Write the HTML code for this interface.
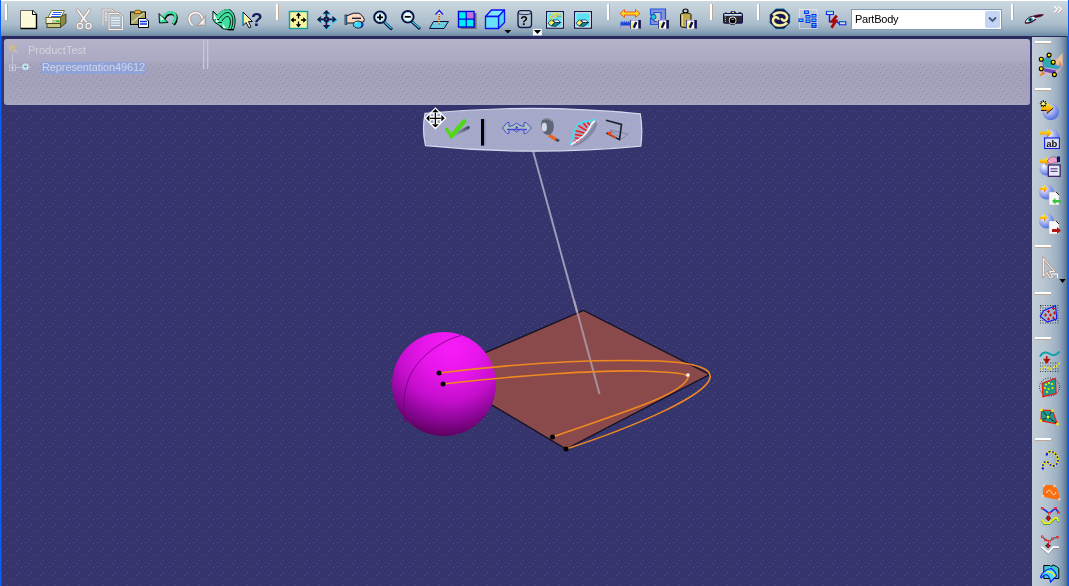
<!DOCTYPE html>
<html><head><meta charset="utf-8">
<style>
*{margin:0;padding:0;box-sizing:border-box}
html,body{width:1069px;height:586px;overflow:hidden;background:#35346c;font-family:"Liberation Sans",sans-serif;position:relative}
.abs{position:absolute}
#lstrip{left:0;top:0;width:2px;height:586px;background:linear-gradient(90deg,#0c60f4 50%,#2046b8 50%)}
#rstrip{left:1067px;top:0;width:2px;height:586px;background:#0c5cf0}
#topbar{left:1px;top:0;width:1067px;height:36px;background:linear-gradient(#ffffff 0,#ffffff 1px,#cbd8e0 1px,#bccbd6 12px,#aabccb 24px,#8ea6ba 31px,#6a88a4 36px)}
#darkband{left:2px;top:36px;width:1065px;height:3px;background:#2a2a5e}
#tree{left:4px;top:39px;width:1026px;height:66px;border-radius:3px;background:linear-gradient(#b6b4ca 0,#b0aec6 10px,#acaac2 22px,#a8a6be 23px,#a6a4bc 27px,#a4a2ba 41px,#a6a4bc 60px,#aaa8c0 66px)}
#rbar{left:1032px;top:37px;width:35px;height:549px;background:linear-gradient(90deg,#c2ced8 0,#b8c6d2 12px,#a8b8c8 21px,#96aabe 27px,#7c94ac 31px,#5c7a9a 34px,#587898 35px)}
.sep{position:absolute;width:3px;height:16px;background:#fff;border-right:1px solid #c0a898}
.hsep{position:absolute;height:3px;width:16px;background:#fff;border-bottom:1px solid #c0a898}
svg{position:absolute;left:0;top:0;overflow:visible}
.txt{will-change:transform}
</style></head><body>
<svg width="1069" height="586" style="left:0;top:0">
 <defs>
  <pattern id="dots" width="12" height="12" patternUnits="userSpaceOnUse">
   <rect x="1" y="2" width="1" height="1" fill="#5454a0"/>
   <rect x="5" y="0" width="1" height="1" fill="#48483a"/>
   <rect x="9" y="3" width="1" height="1" fill="#5454a0"/>
   <rect x="3" y="6" width="1" height="1" fill="#48483a"/>
   <rect x="7" y="8" width="1" height="1" fill="#5454a0"/>
   <rect x="11" y="6" width="1" height="1" fill="#48483a"/>
   <rect x="1" y="10" width="1" height="1" fill="#48483a"/>
   <rect x="4" y="11" width="1" height="1" fill="#5454a0"/>
  </pattern>
  <pattern id="tdots" width="10" height="8" patternUnits="userSpaceOnUse">
   <rect x="0" y="0" width="1" height="1" fill="#6c6c80"/>
   <rect x="5" y="1" width="1" height="1" fill="#7a7ad8"/>
   <rect x="3" y="3" width="1" height="1" fill="#6c6c80"/>
   <rect x="8" y="4" width="1" height="1" fill="#6c6c80"/>
   <rect x="1" y="6" width="1" height="1" fill="#7a7ad8"/>
   <rect x="6" y="6" width="1" height="1" fill="#6c6c80"/>
  </pattern>
 </defs>
 <rect x="1" y="109" width="1031" height="477" fill="url(#dots)" opacity="0.75"/>
</svg>
<div id="lstrip" class="abs"></div>
<div id="rstrip" class="abs"></div>
<div id="topbar" class="abs"></div>
<div id="darkband" class="abs"></div>
<div id="tree" class="abs"></div>
<div id="rbar" class="abs"></div>

<div class="sep" style="left:5px;top:4px"></div>
<div class="sep" style="left:276px;top:4px"></div>
<div class="sep" style="left:607px;top:4px"></div>
<div class="sep" style="left:710px;top:4px"></div>
<div class="sep" style="left:757px;top:4px"></div>
<div class="sep" style="left:1011px;top:4px"></div>

<div class="hsep" style="left:1035px;top:41px"></div>
<div class="hsep" style="left:1035px;top:88px"></div>
<div class="hsep" style="left:1035px;top:245px"></div>
<div class="hsep" style="left:1035px;top:292px"></div>
<div class="hsep" style="left:1035px;top:337px"></div>
<div class="hsep" style="left:1035px;top:438px"></div>

<div class="abs" style="left:851px;top:9px;width:151px;height:21px;background:#fff;border:1px solid #7f9db9"></div>
<div class="abs txt" style="left:855px;top:12px;font-size:11px;letter-spacing:-0.25px;color:#000;line-height:14px">PartBody</div>
<div class="abs" style="left:985px;top:11px;width:15px;height:17px;background:#c4d4f4;border-radius:2px"></div>

<svg width="1069" height="110">
 <rect x="5" y="63" width="1024" height="40" fill="url(#tdots)" opacity="0.42"/>
 <rect x="203" y="39.5" width="1.3" height="29.5" fill="#c8c8dc"/>
 <rect x="207" y="39.5" width="1.3" height="29.5" fill="#c8c8dc"/>
 <g>
  <path d="M9,45.5 C10,43.5 14,43.5 16,45 C17.5,46.5 17,50 15,51.5 C13,52.5 10,52 9,50 C8.2,48.5 8.3,47 9,45.5 Z" fill="#c8b898" opacity="0.85"/>
  <circle cx="12" cy="47.5" r="0.6" fill="#e8e060"/>
  <path d="M14.5,50.5 L16,52.5 L17.5,50.5" fill="none" stroke="#d0d0e0" stroke-width="0.8"/>
  <path d="M12.4,54 V64.6 M15.8,67.6 H20.8" stroke="#c8c8d8" stroke-width="0.9" fill="none"/>
  <rect x="9.5" y="65" width="6" height="5.5" fill="none" stroke="#c8c8d8" stroke-width="0.9"/>
  <path d="M11,67.75 H14 M12.5,66.25 V69.25" stroke="#e0e0ec" stroke-width="0.9"/>
 </g>
 <g>
  <path d="M21.5,67 H29.5 M25.5,63 V71 M22.7,64.2 L28.3,69.8 M28.3,64.2 L22.7,69.8" stroke="#d0d8e8" stroke-width="1.4"/>
  <circle cx="25.5" cy="67" r="3" fill="#d8e0ec"/>
  <ellipse cx="25.5" cy="66.6" rx="1.7" ry="1" fill="#50a8b8"/>
  <path d="M21.5,71.5 L23,69.5 M24.5,71.5 L25.5,69.5 M27.5,71.5 L28.5,69.5" stroke="#7090c8" stroke-width="0.8"/>
 </g>
</svg>
<div class="abs txt" style="left:28px;top:44px;font-size:11px;color:#d4d4e0;line-height:13px">ProductTest</div>
<div class="abs" style="left:41px;top:62px;width:104px;height:12px;background:#8ea2d8"></div>
<div class="abs txt" style="left:42px;top:61px;font-size:11px;letter-spacing:-0.11px;color:#d0d4e8;line-height:13px">Representation49612</div>
<svg width="1069" height="586">
 <defs>
  <radialGradient id="sph" gradientUnits="userSpaceOnUse" cx="448" cy="350" r="95" fx="452" fy="348">
   <stop offset="0" stop-color="#f81cf8"/>
   <stop offset="0.3" stop-color="#e616ea"/>
   <stop offset="0.55" stop-color="#c40ecc"/>
   <stop offset="0.75" stop-color="#8a0696"/>
   <stop offset="0.92" stop-color="#5c005c"/>
   <stop offset="1" stop-color="#500050"/>
  </radialGradient>
 </defs>
 <line x1="533" y1="151" x2="599.5" y2="394" stroke="#9c9cba" stroke-width="2"/>
 <polygon points="583.5,310.5 709.5,374.5 566,449 438,373" fill="#8a4a4c" stroke="#141020" stroke-width="1.3"/>
 <line x1="574" y1="300" x2="599.5" y2="394" stroke="#b0a0b0" stroke-width="2" opacity="0.8"/>
 <circle cx="444" cy="384" r="52" fill="url(#sph)"/>
 <path d="M461,335.5 C440,341 418,357 409,378 C403,392 403,410 405,423" fill="none" stroke="#70007a" stroke-width="1" opacity="0.8"/>
 <g fill="none" stroke="#f08820" stroke-width="1.6">
  <path d="M439,373 C520,363 600,359 660,361 C700,363 712,370 710,378 C706,395 640,425 566,449"/>
  <path d="M443,384 C520,375 600,370 640,371 C670,372 690,373 688,378 C680,395 630,410 552,437"/>
 </g>
 <circle cx="439" cy="373" r="2.5" fill="#000"/>
 <circle cx="443" cy="384" r="2.5" fill="#000"/>
 <circle cx="552.5" cy="437" r="2.5" fill="#000"/>
 <circle cx="566" cy="449" r="2.5" fill="#000"/>
 <rect x="686.5" y="373.5" width="3" height="3" fill="#fff"/>
</svg>
<svg width="1069" height="40" class="txt">
<!-- new doc -->
<g>
 <path d="M20.5,10.5 H32.5 L36.5,14.5 V28.5 H20.5 Z" fill="#fcfad8"/>
 <path d="M20.5,28.5 V10.5 H32.5" fill="none" stroke="#6a6a6a"/>
 <path d="M32.5,10.5 L36.5,14.5 V28.5 H20.5" fill="none" stroke="#000" stroke-width="1.4"/>
 <path d="M32.5,10.5 V14.5 H36.5" fill="#fff" stroke="#000"/>
</g>
<!-- printer -->
<g>
 <path d="M51.5,10.5 H64.5 L61,17.5 H48 Z" fill="#fff" stroke="#7a7a40"/>
 <path d="M53,12.5 H62 M52,14.5 H61 M51,16.5 H60" stroke="#2860f0" stroke-width="1.2"/>
 <path d="M60,17 L66,14 V23 L60,27.5 Z" fill="#8c8c48" stroke="#303018" stroke-width="0.8"/>
 <rect x="46" y="17.5" width="14.5" height="6" fill="#f0f0d8" stroke="#6a6a20"/>
 <rect x="52" y="20" width="8" height="3" fill="#c8c890"/>
 <rect x="56" y="20.5" width="3.5" height="1.4" fill="#20c040"/>
 <rect x="47" y="23.5" width="13.5" height="4" fill="#c8c888" stroke="#4a4a18"/>
</g>
<!-- scissors disabled -->
<g opacity="0.85" fill="none" stroke-linecap="round">
 <path d="M77.5,10 L87.5,23.5 M89.5,10 L80,23.5" stroke="#b09890" stroke-width="3.2"/>
 <path d="M77.5,10 L87.5,23.5 M89.5,10 L80,23.5" stroke="#fff" stroke-width="1.6"/>
 <circle cx="80" cy="26" r="2.6" stroke="#b09890" stroke-width="2.6"/>
 <circle cx="88.5" cy="26" r="2.6" stroke="#b09890" stroke-width="2.6"/>
 <circle cx="80" cy="26" r="2.6" stroke="#fff" stroke-width="1.2"/>
 <circle cx="88.5" cy="26" r="2.6" stroke="#fff" stroke-width="1.2"/>
</g>
<!-- copy disabled -->
<g opacity="0.85" fill="none">
 <path d="M103,25.5 V10 H112 L114,12 V14" stroke="#b09890" stroke-width="2.4"/>
 <path d="M103,25.5 V10 H112 L114,12 V14" stroke="#fff" stroke-width="1"/>
 <path d="M109,29.5 V13.5 H119 L122.5,17 V29.5 Z" stroke="#b09890" stroke-width="2.4"/>
 <path d="M109,29.5 V13.5 H119 L122.5,17 V29.5 Z" stroke="#fff" stroke-width="1"/>
 <path d="M105,14 H107 M105,17 H107 M105,20 H107 M111,18 H120 M111,20.5 H120 M111,23 H120 M111,25.5 H120" stroke="#fff" stroke-width="1"/>
</g>
<!-- paste -->
<g>
 <rect x="130.5" y="12" width="15" height="12.5" fill="#a8a468" stroke="#000" stroke-width="1"/>
 <path d="M131.5,23 L144,13" stroke="#d8d8a8" stroke-width="1.5"/>
 <path d="M134,13.5 L135.5,10.3 H140 L141.5,13.5 Z" fill="#f0b820" stroke="#604010" stroke-width="0.8"/>
 <path d="M138.5,18.5 H146 L148.5,21 V27.5 H138.5 Z" fill="#fff" stroke="#000"/>
 <path d="M140,21.5 H147 M140,24 H147" stroke="#0030f0" stroke-width="1.3"/>
</g>
<!-- undo -->
<g>
 <path d="M164,18.5 C166,14 170,13 172.5,13.5 C177,14.5 177,20 173.5,24.5" fill="none" stroke="#000" stroke-width="3.6"/>
 <path d="M163.5,17.5 C165.5,13 169.5,12 172,12.5 C176.5,13.5 176.5,19 173,23.5" fill="none" stroke="#40e0a0" stroke-width="2.6"/>
 <path d="M159,13.5 L159.5,23 L168,22.5 Z" fill="#40e0a0" stroke="#000" stroke-width="0.9"/>
 <path d="M160,15.5 L161,21 L164,19 Z" fill="#e0ffe8"/>
</g>
<!-- redo disabled -->
<g opacity="0.85" fill="none">
 <path d="M192.5,25.5 C189.5,23 188.5,19 189.5,16.5 C191,13 195,12 198,13 C200.5,14 202,16.5 202.5,19" stroke="#b09890" stroke-width="3.4"/>
 <path d="M192.5,25.5 C189.5,23 188.5,19 189.5,16.5 C191,13 195,12 198,13 C200.5,14 202,16.5 202.5,19" stroke="#fff" stroke-width="1.6"/>
 <path d="M205.5,16 V25.5 H197 Z" fill="#fff" stroke="#b09890" stroke-width="1.2"/>
 <path d="M204.3,19 V24.3 H199.5" stroke="#c8b8b0" stroke-width="0.8"/>
</g>
<!-- multi undo -->
<g>
 <path d="M213,11 L217.5,15.5 C220,11.5 224,9.5 228.5,9.5 C232,10 234.5,14 235,19 C235.5,23 234.5,27 233.5,29.5 L228,29.5 L222.5,28.7 L219.5,25.5 L215,22.5 L213,19.5 Z" fill="#40e0a0" stroke="#000" stroke-width="0.9"/>
 <path d="M217.5,15.5 C220,11.5 224,9.5 228.5,9.5" fill="none" stroke="#40e0a0" stroke-width="1.2"/>
 <g fill="none" stroke="#000" stroke-width="0.9">
  <path d="M219.5,18.5 C222,14.5 225,12.5 228,12.5 C231,13 232.5,16 232.8,20 C233,24 232,27 231,29"/>
  <path d="M222,21 C224,18 226,16 228,16.5 C230,17.5 230.5,20 230.3,23 C230,25.5 229.5,27 228.5,28.5"/>
  <path d="M215.5,19.5 H219 M218,22.4 H222 M220,25.5 L224,28.7"/>
 </g>
 <path d="M213.6,13 V19 L216.8,19 Z" fill="#f0fff0"/>
 <path d="M216,18 V22 L218.8,22 Z" fill="#f0fff0"/>
 <path d="M222.8,23.5 V28.2 L225.8,28.2 Z" fill="#f0fff0"/>
 <path d="M228,29.8 H234" stroke="#000" stroke-width="1.2"/>
</g>
<!-- whats this -->
<g>
 <path d="M243,12 V25.5 L246,22.5 L249,28 L251,27 L248.5,21.5 L252.5,21.5 Z" fill="#f8f4a0" stroke="#101040" stroke-width="1"/>
 <path d="M242.5,12 V25.5" stroke="#20b0c0" stroke-width="0.8"/>
 <text x="251" y="26" font-family="Liberation Sans" font-weight="bold" font-size="19" fill="#181858">?</text>
</g>
<!-- fit all -->
<g>
 <rect x="289.5" y="11.5" width="18" height="17" fill="#f8f4a0" stroke="#10a0a0" stroke-width="1.4"/>
 <path d="M298.5,15 V18.5 M298.5,21.5 V25 M292.5,20 H296 M301,20 H304.5" stroke="#000" stroke-width="1.3"/>
 <path d="M298.5,12.6 L295.8,15.8 H301.2 Z M298.5,27.4 L295.8,24.2 H301.2 Z M290.6,20 L293.8,17.3 V22.7 Z M306.4,20 L303.2,17.3 V22.7 Z" fill="#000"/>
</g>
<!-- pan -->
<g transform="translate(0.6,0.6)" fill="#30d8f8" stroke="#30d8f8" stroke-width="1">
 <path d="M326.4,13.8 V25 M320.8,19.4 H332.4" stroke-width="1.6"/>
 <path d="M326.4,10 L322.8,13.8 H330 Z M326.4,29.2 L322.8,25 H330 Z M317,19.4 L320.8,16 V22.8 Z M336.6,19.4 L332.4,16 V22.8 Z"/>
 <circle cx="326.4" cy="19.4" r="2.8"/>
</g>
<g fill="#1a1848">
 <path d="M326.4,13.8 V25 M320.8,19.4 H332.4" stroke="#1a1848" stroke-width="1.6"/>
 <path d="M326.4,10 L322.8,13.8 H330 Z M326.4,29.2 L322.8,25 H330 Z M317,19.4 L320.8,16 V22.8 Z M336.6,19.4 L332.4,16 V22.8 Z"/>
 <circle cx="326.4" cy="19.4" r="2.8"/>
 <circle cx="326.4" cy="19.2" r="0.8" fill="#20a0a0"/>
</g>
<!-- rotate hand -->
<g>
 <path d="M346.5,16 C349,15 351,14 353.5,13.2 H358.5 C361,14 363.5,16.5 364.3,19.5 L363.5,22 L358,23 H346.5 Z" fill="#f8d4b8" stroke="#101030" stroke-width="1"/>
 <path d="M348,17.5 C351,16 355,15 359,15.5" fill="none" stroke="#fff" stroke-width="0.7" stroke-dasharray="0.8 1"/>
 <rect x="345" y="15" width="1.8" height="9.4" fill="#30d0e0" stroke="#101030" stroke-width="0.7"/>
 <path d="M352,18.3 H361" stroke="#101030" stroke-width="1.3"/>
 <ellipse cx="358.2" cy="24.6" rx="4.9" ry="3.5" fill="#40d8f8" stroke="#101030" stroke-width="0.9"/>
 <path d="M361,22 C362.5,23 362.5,26 361,27.5" fill="none" stroke="#1010e0" stroke-width="1.4"/>
 <path d="M355,23 L357,22.5" stroke="#e0ffff" stroke-width="0.8"/>
</g>
<!-- zoom in -->
<g>
 <path d="M384,22 L392,29.5" stroke="#101040" stroke-width="3"/>
 <path d="M384.5,22 L391.5,28.5" stroke="#30d0e8" stroke-width="1.2"/>
 <circle cx="380" cy="17.3" r="5.8" fill="#fff" stroke="#101040" stroke-width="2"/>
 <circle cx="380" cy="17.3" r="4.3" fill="none" stroke="#30d0e8" stroke-width="0.6"/>
 <path d="M377,17.3 H383 M380,14.3 V20.3" stroke="#000" stroke-width="1.8"/>
</g>
<!-- zoom out -->
<g>
 <path d="M411.5,21.5 L420,29" stroke="#101040" stroke-width="3"/>
 <path d="M412,21.5 L419.5,28" stroke="#30d0e8" stroke-width="1.2"/>
 <circle cx="407.8" cy="16.8" r="5.8" fill="#fff" stroke="#101040" stroke-width="2"/>
 <circle cx="407.8" cy="16.8" r="4.3" fill="none" stroke="#30d0e8" stroke-width="0.6"/>
 <path d="M404.8,16.8 H410.8" stroke="#000" stroke-width="1.8"/>
</g>
<!-- normal view -->
<g>
 <path d="M433.5,21.5 H448.5 L444,28.5 H429.5 Z" fill="#60c8e0" stroke="#101040" stroke-width="1"/>
 <path d="M434,23.5 H446 M432,26 H444" stroke="#a0e8f0" stroke-width="0.8" stroke-dasharray="1 1"/>
 <path d="M439.3,24.5 V13" stroke="#f0e040" stroke-width="1.5"/>
 <path d="M439.3,24.5 V13" stroke="#e02020" stroke-width="1.5" stroke-dasharray="1.2 1.2"/>
 <path d="M435.5,14.5 L439.3,10.5 L443,14.5" fill="none" stroke="#1818f0" stroke-width="1.2"/>
 <path d="M437.5,14 L439.3,12 L441,14 Z" fill="#f8f0b0"/>
</g>
<!-- multi view -->
<g>
 <rect x="460.5" y="13" width="16" height="16" fill="#706868"/>
 <rect x="458.5" y="11.5" width="15.5" height="15.5" fill="#00f0f8" stroke="#0000e0" stroke-width="1.4"/>
 <rect x="466.3" y="12.2" width="7" height="7" fill="#c070e0"/>
 <path d="M466.2,11.5 V27 M458.5,19.2 H474" stroke="#0000e0" stroke-width="1.2"/>
</g>
<!-- iso cube -->
<g stroke="#0a10f0" stroke-width="1.3" stroke-linejoin="round">
 <path d="M485.5,16.5 L491.5,10 H504.5 L498.5,16.5 Z" fill="#80e8f8"/>
 <path d="M498.5,16.5 L504.5,10 V22.5 L498.5,28.5 Z" fill="#50d8f0"/>
 <rect x="485.5" y="16.5" width="13" height="12" fill="#68e0f8"/>
 <path d="M504.3,30 H511.3 L507.8,33.6 Z" fill="#000" stroke="none"/>
</g>
<!-- hide show -->
<g>
 <rect x="518" y="10.7" width="13.5" height="16.8" rx="3" fill="none" stroke="#181848" stroke-width="1.3"/>
 <path d="M518.5,13.5 C521,15 528.5,15 531,13.5" fill="none" stroke="#181848" stroke-width="0.9"/>
 <text x="520.2" y="24.8" font-family="Liberation Sans" font-weight="bold" font-size="12.5" fill="#000">?</text>
 <rect x="532.9" y="28.9" width="9" height="6.5" fill="#fff"/>
 <path d="M533.8,30 H541.2 L537.5,34 Z" fill="#000"/>
</g>
<!-- swap visible space -->
<g>
 <rect x="546.6" y="11.6" width="16.8" height="16.6" fill="#fff" stroke="#181848" stroke-width="1.2"/>
 <rect x="548.2" y="13.2" width="13.6" height="13.4" fill="#5ce0f4"/>
 <g stroke="#f0f000" stroke-width="0.9" stroke-linejoin="round" fill="#b4bcd0">
  <path d="M553.2,13.7 H558 L561.5,16.3 H556.3 Z"/>
  <path d="M549.6,17.4 L553.2,13.8 L556.2,16.3 L552.4,19.5 Z"/>
 </g>
 <path d="M557,16.3 H561.5" stroke="#8888a0" stroke-width="0.9"/>
 <g transform="translate(0,0)" stroke="#101040" stroke-width="0.7" stroke-linejoin="round">
  <path d="M553,20 H557.8 L560.5,22.5 H555.4 Z" fill="#fff"/>
  <path d="M551.2,25.9 L555.4,22.5 H560.5 L555.8,26.4 Z" fill="#108c8c"/>
  <path d="M548,23.2 L551.4,19.8 L554.6,22.4 L551.2,25.9 Z" fill="#f8f060"/>
 </g>
</g>
<!-- show -->
<g>
 <rect x="574.6" y="11.6" width="16.8" height="16.6" fill="#fff" stroke="#181848" stroke-width="1.2"/>
 <rect x="576.2" y="13.2" width="13.6" height="13.4" fill="#5ce0f4"/>
 <g transform="translate(28,0)" stroke="#101040" stroke-width="0.7" stroke-linejoin="round">
  <path d="M553,20 H557.8 L560.5,22.5 H555.4 Z" fill="#fff"/>
  <path d="M551.2,25.9 L555.4,22.5 H560.5 L555.8,26.4 Z" fill="#108c8c"/>
  <path d="M548,23.2 L551.4,19.8 L554.6,22.4 L551.2,25.9 Z" fill="#f8f060"/>
 </g>
</g>
<!-- measure between -->
<g>
 <path d="M620,13.5 L624.5,9.5 V12 H635.5 V9.5 L640,13.5 L635.5,17.5 V15 H624.5 V17.5 Z" fill="#f8d820" stroke="#f04010" stroke-width="0.8"/>
 <rect x="620.5" y="21.5" width="11" height="6.5" fill="#1848d8"/>
 <rect x="620.5" y="25.5" width="11" height="2.5" fill="#b0a8c8"/>
 <path d="M621,22 H631" stroke="#a8d0ff" stroke-width="0.8" stroke-dasharray="1 1"/>
 <g transform="translate(630,0)">
 <rect x="0.2" y="19.9" width="10.6" height="9.2" fill="#fff"/>
 <path d="M0.2,20.3 H10.8" stroke="#9a98d0" stroke-width="0.9"/>
 <path d="M0.6,20 V29" stroke="#303080" stroke-width="1"/>
 <rect x="8.3" y="20" width="2.6" height="9.1" fill="#10104a"/>
 <path d="M0.2,28.8 H10.8" stroke="#a8a8c8" stroke-width="0.7"/>
 <ellipse cx="2.9" cy="25.6" rx="2" ry="3.1" fill="#f0f080"/>
 <path d="M6.3,22 L3.8,27.8" stroke="#101048" stroke-width="2.4"/>
</g>
</g>
<!-- measure item -->
<g>
 <path d="M650.5,9 H665.5 V24.5 H650.5 V18 H654 V21.5 H661 V12.5 H654 V15 H650.5 Z" fill="#8890d8" stroke="#1858e0" stroke-width="1.2"/>
 <circle cx="653.5" cy="17" r="2.5" fill="#20c8f0" stroke="#101040" stroke-width="0.6"/>
 <path d="M654,19 L658,22 H662 L658,19 Z" fill="#e8c890"/>
 <g transform="translate(658,0)">
 <rect x="0.2" y="19.9" width="10.6" height="9.2" fill="#fff"/>
 <path d="M0.2,20.3 H10.8" stroke="#9a98d0" stroke-width="0.9"/>
 <path d="M0.6,20 V29" stroke="#303080" stroke-width="1"/>
 <rect x="8.3" y="20" width="2.6" height="9.1" fill="#10104a"/>
 <path d="M0.2,28.8 H10.8" stroke="#a8a8c8" stroke-width="0.7"/>
 <ellipse cx="2.9" cy="25.6" rx="2" ry="3.1" fill="#f0f080"/>
 <path d="M6.3,22 L3.8,27.8" stroke="#101048" stroke-width="2.4"/>
</g>
</g>
<!-- inertia -->
<g>
 <ellipse cx="685.5" cy="11" rx="2.5" ry="2" fill="#c0c0d0" stroke="#000" stroke-width="1.2"/>
 <path d="M680.5,14.5 C680.5,12.5 691,12.5 691,14.5 V26 C691,28 680.5,28 680.5,26 Z" fill="#c0a850" stroke="#000" stroke-width="0.9"/>
 <path d="M682.5,15 V26" stroke="#e8d890" stroke-width="1"/>
 <g transform="translate(686,0)">
 <rect x="0.2" y="19.9" width="10.6" height="9.2" fill="#fff"/>
 <path d="M0.2,20.3 H10.8" stroke="#9a98d0" stroke-width="0.9"/>
 <path d="M0.6,20 V29" stroke="#303080" stroke-width="1"/>
 <rect x="8.3" y="20" width="2.6" height="9.1" fill="#10104a"/>
 <path d="M0.2,28.8 H10.8" stroke="#a8a8c8" stroke-width="0.7"/>
 <ellipse cx="2.9" cy="25.6" rx="2" ry="3.1" fill="#f0f080"/>
 <path d="M6.3,22 L3.8,27.8" stroke="#101048" stroke-width="2.4"/>
</g>
</g>
<!-- camera -->
<g>
 <path d="M730.2,13.3 L731,11.2 H735.3 L736.2,13.3 Z" fill="#181860"/>
 <rect x="732" y="12" width="2.2" height="1" fill="#f0e020"/>
 <rect x="725" y="12.5" width="2" height="1.5" fill="#404050"/>
 <rect x="738.5" y="12.3" width="2.8" height="1.7" fill="#101018"/>
 <rect x="723.5" y="13.5" width="19" height="9.7" rx="0.8" fill="#2a2434" stroke="#10104a" stroke-width="1"/>
 <rect x="724.3" y="14" width="17.4" height="1.8" fill="#c4e0f0"/>
 <path d="M725.3,16.5 V22" stroke="#f0e080" stroke-width="0.9" stroke-dasharray="1.2 1"/>
 <circle cx="732.6" cy="20.4" r="4.3" fill="#fff" stroke="#000" stroke-width="0.8"/>
 <circle cx="732.6" cy="20.6" r="3" fill="#000"/>
 <path d="M731.5,18.8 L732.6,20 L733.8,18.8" fill="none" stroke="#fff" stroke-width="0.8"/>
</g>
<!-- swirl -->
<g>
 <path d="M775.8,8.8 H784 L790,14.8 V23 L784,29 H775.8 L769.8,23 V14.8 Z" fill="#161650" stroke="#20b0b8" stroke-width="0.6"/>
 <path d="M773.2,15.5 C775.5,12 783.5,11.3 786.3,15 C788.2,17.8 786.5,21 783.7,20.6 C782.2,20.3 781.5,19 781.8,18" fill="none" stroke="#f8f0a0" stroke-width="2.6"/>
 <path d="M787,22.5 C784.5,26.2 776.5,26.8 773.8,22.9 C771.9,20.1 773.4,16.9 776.3,17.2 C777.8,17.4 778.6,18.6 778.4,19.7" fill="none" stroke="#f8f0a0" stroke-width="2.6"/>
</g>
<!-- tree graph -->
<g>
 <rect x="799.5" y="9.5" width="17.5" height="19" fill="none" stroke="#fff" stroke-width="0.9" stroke-dasharray="1 1"/>
 <g fill="#40d8f0" stroke="#0820f0" stroke-width="0.9">
  <rect x="804.5" y="11" width="4" height="2.5"/>
  <rect x="806" y="15.5" width="4" height="2.5"/>
  <rect x="812" y="14.5" width="4" height="2.5"/>
  <rect x="799" y="19" width="4" height="2.5"/>
  <rect x="806" y="20" width="4" height="2.5"/>
  <rect x="812" y="19" width="4" height="2.5"/>
  <rect x="812" y="23.5" width="4" height="2.5"/>
  <rect x="812" y="26" width="4" height="1.5"/>
 </g>
</g>
<!-- lightning -->
<g>
 <path d="M829.5,14.5 V21.5 H831.5 M836.5,21.5 L839,23.5" stroke="#0818f0" stroke-width="1.4" fill="none"/>
 <rect x="826.4" y="11.4" width="7" height="3.2" fill="#d0e0e0" stroke="#0818f0" stroke-width="1"/>
 <path d="M826.4,11.6 H833.4" stroke="#10a0a0" stroke-width="0.8"/>
 <rect x="839.3" y="21.6" width="6.5" height="3.2" fill="#d0e0e0" stroke="#0818f0" stroke-width="1"/>
 <path d="M839.3,21.8 H845.8" stroke="#10a0a0" stroke-width="0.8"/>
 <path d="M836.8,15.6 L832.3,21.2 L835.8,21 L831.5,27.8" fill="none" stroke="#a80808" stroke-width="2.8" stroke-linejoin="miter"/>
</g>
<!-- combo chevron -->
<path d="M989,17.5 L992.5,21 L996,17.5" fill="none" stroke="#4a5a78" stroke-width="1.8"/>
<!-- eye -->
<g>
 <path d="M1030.5,17 C1034,15.5 1039,14.3 1043.5,14.6 C1042,16.8 1038,17.3 1034,17.5 Z" fill="#3a0018" stroke="#5a1828" stroke-width="0.7"/>
 <path d="M1025,22.5 C1026.5,18.5 1029.5,16.5 1032.5,16.5 C1034.5,16.5 1035.5,18 1035.5,19 C1033,21.5 1029,23.5 1025,22.5 Z" fill="#e8f0f8"/>
 <circle cx="1030.3" cy="19.6" r="2.6" fill="#38b8d0"/>
 <circle cx="1030.3" cy="19.6" r="1.2" fill="#000"/>
 <path d="M1025,22.5 C1026.5,18.5 1029.5,16.5 1032.5,16.5" fill="none" stroke="#4a1020" stroke-width="1"/>
 <path d="M1025,22.8 C1029.5,23.8 1033,21.5 1035.8,19" fill="none" stroke="#4a1020" stroke-width="1.5"/>
</g>
<!-- chevrons -->
<g fill="none" stroke-width="1.2">
 <path d="M1054,6 L1057.5,9.3 L1054,12.6 M1058,6 L1061.5,9.3 L1058,12.6" stroke="#c8a8a0" transform="translate(0.6,0.6)"/>
 <path d="M1054,6 L1057.5,9.3 L1054,12.6 M1058,6 L1061.5,9.3 L1058,12.6" stroke="#fff"/>
</g>
</svg>
<svg width="1069" height="586" class="txt">
<defs>
 <radialGradient id="bsph" cx="0.35" cy="0.3" r="0.75">
  <stop offset="0" stop-color="#ffffff"/>
  <stop offset="0.35" stop-color="#b8c0f0"/>
  <stop offset="1" stop-color="#4868e0"/>
 </radialGradient>
 <linearGradient id="yarrow" x1="0" y1="0" x2="0" y2="1">
  <stop offset="0" stop-color="#fff040"/>
  <stop offset="0.6" stop-color="#f8b800"/>
  <stop offset="1" stop-color="#e04000"/>
 </linearGradient>
</defs>
<!-- icon 1: sketch tracer -->
<g>
 <path d="M1039,77 L1041,58 L1050,56 L1055,61 L1062.6,53 L1062.5,66 L1057,73 L1050,76 L1045,72 Z" fill="#f0c098"/>
 <path d="M1039,77 L1043,70 L1046,73 Z M1056,72 L1062,66 L1060,61 Z" fill="#e08848"/>
 <path d="M1041.5,59.5 L1049,55.5 L1053,62 L1055,64.5 L1062,66.5 L1057,70 L1043,68 Z" fill="#30a8b0" stroke="#b890d8" stroke-width="1"/>
 <path d="M1043,67.5 L1057,70 L1054.5,74.5 L1044,72 Z" fill="#6848b0" stroke="#d8b8f0" stroke-width="0.9"/>
 <g fill="#f8f000" stroke="#000" stroke-width="1.1">
  <circle cx="1041.3" cy="59.2" r="2"/>
  <circle cx="1049.1" cy="55.1" r="2"/>
  <circle cx="1053.2" cy="62.3" r="2"/>
  <circle cx="1041.3" cy="68.7" r="2"/>
  <circle cx="1054.4" cy="74.6" r="2"/>
 </g>
</g>
<!-- icon 2: sphere + star arrow -->
<g>
 <circle cx="1050.7" cy="112" r="8.3" fill="url(#bsph)"/>
 <path d="M1041,105.5 H1046.5 V102 L1053.2,107.8 L1046.5,113.5 V110 H1041 Z" fill="url(#yarrow)"/>
 <path d="M1041,110.5 H1046.5 M1046.8,113.5 L1053,108.3" stroke="#201000" stroke-width="1"/>
 <path d="M1043.3,100.3 V107.3 M1039.8,103.8 H1046.8 M1040.8,101.3 L1045.8,106.3 M1045.8,101.3 L1040.8,106.3" stroke="#000" stroke-width="1.1"/>
 <circle cx="1043.3" cy="103.8" r="1.8" fill="#fff860"/>
</g>
<!-- icon 3: ab -->
<g>
 <circle cx="1052" cy="137" r="7.5" fill="url(#bsph)"/>
 <path d="M1040,131.5 H1047 V128.5 L1052,133 L1047,137.5 V134.5 H1040 Z" fill="url(#yarrow)"/>
 <rect x="1044.6" y="138" width="14.8" height="10.5" fill="#dcdcf0" stroke="#1020e0" stroke-width="1.1"/>
 <text x="1046.3" y="146.6" font-family="Liberation Sans" font-size="9.5" font-weight="bold" fill="#101010">ab</text>
</g>
<!-- icon 4: arrow hand doc -->
<g>
 <circle cx="1046" cy="169" r="6.5" fill="url(#bsph)"/>
 <path d="M1040,159.5 H1045.5 V156.5 L1050,161 L1045.5,165.5 V163 H1040 Z" fill="url(#yarrow)"/>
 <path d="M1047,161 L1051,157 H1056 L1058,162 L1050,164 Z" fill="#f0a0c8" stroke="#705070" stroke-width="0.6"/>
 <rect x="1057" y="156.5" width="3" height="5.5" fill="#101070"/>
 <rect x="1048.3" y="165" width="11.8" height="11.3" fill="#e8e8f8" stroke="#301860" stroke-width="1.2"/>
 <path d="M1050.5,168.8 H1057.5 M1050.5,171.3 H1057.5" stroke="#301860" stroke-width="0.9"/>
</g>
<!-- icon 5: arrow sphere doc green -->
<g>
 <circle cx="1046.5" cy="192" r="7.5" fill="url(#bsph)"/>
 <path d="M1040,187.5 H1044 V184.5 L1047.5,188.5 L1044,192.5 V190 H1040 Z" fill="url(#yarrow)"/>
 <path d="M1049,192 H1056 L1059,195 V205 H1049 Z" fill="#f8f8f8" stroke="#b0b0b0" stroke-width="0.5"/>
 <path d="M1056,192 L1059,195" stroke="#303030" stroke-width="1"/>
 <path d="M1052,201 L1055.5,198 V200 H1061 V202.5 H1055.5 V204.5 Z" fill="#40c040"/>
</g>
<!-- icon 6: red -->
<g>
 <circle cx="1046.5" cy="221" r="7.5" fill="url(#bsph)"/>
 <path d="M1040,216.5 H1044 V213.5 L1047.5,217.5 L1044,221.5 V219 H1040 Z" fill="url(#yarrow)"/>
 <path d="M1049,221 H1056 L1059,224 V234 H1049 Z" fill="#f8f8f8" stroke="#b0b0b0" stroke-width="0.5"/>
 <path d="M1056,221 L1059,224" stroke="#303030" stroke-width="1"/>
 <path d="M1052,229 H1057 V227 L1061,230.5 L1057,234 V232 H1052 Z" fill="#b01818"/>
</g>
<!-- cursor disabled -->
<g fill="none">
 <path d="M1043.5,258.5 V276 L1047,272.5 L1050,278 L1052.5,277 L1049.5,271.5 L1054.5,271.5 Z" stroke="#b09890" stroke-width="2.2"/>
 <path d="M1043.5,258.5 V276 L1047,272.5 L1050,278 L1052.5,277 L1049.5,271.5 L1054.5,271.5 Z" stroke="#fff" stroke-width="0.9"/>
 <path d="M1052,274 H1057.5 V278" stroke="#fff" stroke-width="1"/>
 <path d="M1059.4,279 H1065.7 L1062.5,283 Z" fill="#000"/>
</g>
<!-- dotted cloud blue poly -->
<g>
 <g fill="#000">
  <circle cx="1041" cy="306" r="0.6"/>
 </g>
 <rect x="1039.7" y="305" width="19.6" height="19" fill="none" stroke="#000" stroke-width="0" />
 <path d="M1040,305.5 H1059 M1040,308 H1059 M1040,310.5 H1059 M1040,313 H1059 M1040,315.5 H1059 M1040,318 H1059 M1040,320.5 H1059 M1040,323 H1059" stroke="#000" stroke-width="0.9" stroke-dasharray="0.9 1.6" opacity="0.85"/>
 <path d="M1040.3,316.4 L1043.5,310.7 L1055.5,305.6 L1056.8,318.9 L1047.3,322 Z" fill="#a8b0c8" stroke="#1020f0" stroke-width="1.2"/>
 <g stroke="#c01010" stroke-width="1">
  <path d="M1052,308.5 h3 m-1.5,-1.5 v3"/>
  <path d="M1047,311.5 h3 m-1.5,-1.5 v3"/>
  <path d="M1044,315 h3 m-1.5,-1.5 v3"/>
  <path d="M1049,315 h3 m-1.5,-1.5 v3"/>
  <path d="M1053,313 h3 m-1.5,-1.5 v3"/>
  <path d="M1047,319 h3 m-1.5,-1.5 v3"/>
  <path d="M1052,318 h3 m-1.5,-1.5 v3"/>
 </g>
</g>
<!-- teal wave + arrow + yellow dots -->
<g>
 <path d="M1040,356.5 C1043,351 1047,352 1050,354 C1053,356 1056,356 1059.5,351.5" fill="none" stroke="#10a0a8" stroke-width="2"/>
 <path d="M1046.7,356 V360 M1044.5,359.5 L1046.7,362.5 L1049,359.5 Z" stroke="#b01010" stroke-width="1.6" fill="#b01010"/>
 <path d="M1040,363 H1060 M1040,366 H1060 M1040,369 H1060 M1040,371.5 H1060" stroke="#000" stroke-width="0.9" stroke-dasharray="0.9 1.6" opacity="0.85"/>
 <g fill="#f8f000"><circle cx="1041.5" cy="369" r="1"/><circle cx="1045" cy="367" r="1"/><circle cx="1048" cy="368" r="1"/><circle cx="1051" cy="369" r="1"/><circle cx="1054" cy="367" r="1"/><circle cx="1057" cy="366" r="1"/><circle cx="1059" cy="363.5" r="1"/></g>
</g>
<!-- green quad -->
<g>
 <ellipse cx="1049.5" cy="387" rx="10" ry="9" fill="none" stroke="#000" stroke-width="0.9" stroke-dasharray="0.9 1.6"/>
 <path d="M1042.2,383.4 L1055.5,378.3 L1056,393.5 L1042.9,396.7 Z" fill="#20988c" stroke="#f01818" stroke-width="1.2"/>
 <g fill="#f8f000"><circle cx="1046" cy="384.5" r="1.1"/><circle cx="1049" cy="383" r="1.1"/><circle cx="1052" cy="384" r="1.1"/><circle cx="1045" cy="388" r="1.1"/><circle cx="1048.5" cy="389" r="1.1"/><circle cx="1052.5" cy="388" r="1.1"/><circle cx="1047" cy="392" r="1.1"/></g>
</g>
<!-- kite -->
<g>
 <path d="M1041.6,410 L1052.4,410.6 L1057.4,424 L1041,420.7 Z" fill="#20988c" stroke="#f01818" stroke-width="1.2"/>
 <path d="M1041.6,410 L1048,417 L1057.4,424 M1052.4,410.6 L1048,417 L1041,420.7" stroke="#102028" stroke-width="0.9" fill="none"/>
 <g fill="#f8f000"><rect x="1040.4" y="408.8" width="2.4" height="2.4"/><rect x="1051.2" y="409.4" width="2.4" height="2.4"/><rect x="1056.2" y="422.8" width="2.4" height="2.4"/><rect x="1039.8" y="419.5" width="2.4" height="2.4"/><rect x="1046.8" y="415.8" width="2.4" height="2.4"/></g>
</g>
<!-- S curve -->
<g fill="none">
 <path d="M1046.8,454.8 C1047,452 1049,451.2 1051.4,451.5 C1054,452 1057.5,455 1058,459.5 C1058.3,462.5 1056,466 1052.5,466 C1050,465.5 1049,462 1046,461.8 C1043.5,461.8 1042.6,464.5 1042.8,469" stroke="#f8f000" stroke-width="2.2"/>
 <path d="M1046.8,454.8 C1047,452 1049,451.2 1051.4,451.5 C1054,452 1057.5,455 1058,459.5 C1058.3,462.5 1056,466 1052.5,466 C1050,465.5 1049,462 1046,461.8 C1043.5,461.8 1042.6,464.5 1042.8,469" stroke="#0a10e0" stroke-width="1.5" stroke-dasharray="2 1.5"/>
 <rect x="1045.8" y="453.5" width="2" height="2" fill="#0a10e0"/>
 <rect x="1041.8" y="467.5" width="2" height="2" fill="#0a10e0"/>
</g>
<!-- orange blob -->
<g>
 <path d="M1044,485.5 C1050,484.5 1054,485 1056,487 C1058,490 1060,495 1059.3,499.3 C1053,499 1046,498 1043,496 C1042.5,492 1043,488 1044,485.5 Z" fill="#f87010"/>
 <path d="M1046.5,493 C1048,489.5 1050,489.5 1051.5,492.5 C1053,495.5 1055,495.5 1056,492" fill="none" stroke="#fff0e0" stroke-width="1"/>
 <g fill="#f8d0b0"><circle cx="1044" cy="485.5" r="1.2"/><circle cx="1054.5" cy="486" r="1.2"/><circle cx="1059.3" cy="499.2" r="1.2"/><circle cx="1043" cy="496" r="1.2"/></g>
</g>
<!-- poly + yellow -->
<g>
 <path d="M1042.1,508.2 L1049.3,513.3 L1055.5,508.2 L1058.5,512.5" fill="none" stroke="#1030f0" stroke-width="1.6"/>
 <g fill="#fff" stroke="#f01818" stroke-width="0.8"><rect x="1041.3" y="507.4" width="1.6" height="1.6"/><rect x="1048.5" y="512.5" width="1.6" height="1.6"/><rect x="1054.7" y="507.4" width="1.6" height="1.6"/><rect x="1057.7" y="511.7" width="1.6" height="1.6"/></g>
 <path d="M1047.3,516 H1049.3 V518 H1050.8 L1048.3,520.8 L1045.8,518 H1047.3 Z" fill="#f01010" stroke="#000" stroke-width="0.6"/>
 <path d="M1041.6,520 L1044.2,524 H1049.3 L1055,518.5 H1057 L1058.5,522" fill="none" stroke="#108080" stroke-width="2"/>
 <path d="M1041.6,519.5 L1044.2,523.3 H1049.3 L1055,517.8 H1057 L1058.5,521.3" fill="none" stroke="#f8f000" stroke-width="1.8"/>
</g>
<!-- poly + white V -->
<g>
 <path d="M1042.2,536.7 L1045.6,540 L1049.4,541.5 L1052.7,538.6 L1057.5,537.2" fill="none" stroke="#108888" stroke-width="1.4"/>
 <g fill="#fff" stroke="#f01818" stroke-width="0.8"><rect x="1041.4" y="535.9" width="1.6" height="1.6"/><rect x="1044.8" y="539.2" width="1.6" height="1.6"/><rect x="1048.6" y="540.7" width="1.6" height="1.6"/><rect x="1051.9" y="537.8" width="1.6" height="1.6"/><rect x="1056.7" y="536.4" width="1.6" height="1.6"/></g>
 <path d="M1047,543.8 H1049 V545.5 H1050.5 L1048,548 L1045.5,545.5 H1047 Z" fill="#f01010" stroke="#000" stroke-width="0.6"/>
 <path d="M1041.3,547.5 L1048.4,553.2 L1053.2,548 H1058.9" fill="none" stroke="#8a8a8a" stroke-width="2"/>
 <path d="M1041.3,546.7 L1048.4,552.4 L1053.2,547.2 H1058.9" fill="none" stroke="#fff" stroke-width="1.8"/>
</g>
<!-- surface -->
<g>
 <path d="M1043.8,565.5 H1050 L1051,566.5 L1053,565 L1056.5,566.5 L1058.8,568.5 V578.5 H1043.8 Z" fill="#40c8d8" stroke="#000" stroke-width="1"/>
 <path d="M1040.5,577 C1042.5,572 1046,569.5 1051,568.5 C1054,570 1056,573 1056.5,576 L1050.5,582 C1050,578 1048.5,575 1046,574.5 C1044,575 1042.5,576.5 1041.5,578 Z" fill="#50d8f8" stroke="#0818f0" stroke-width="1.1"/>
 <path d="M1046.5,572 C1050,571 1053.5,572.5 1055,576.5" fill="none" stroke="#f8f020" stroke-width="1.6"/>
</g>
</svg>
<svg width="1069" height="586">
 <defs>
  <clipPath id="fclip"><path d="M425,113.4 Q533,103 640.3,113.8 Q643,130 640.8,146.1 Q533,156.5 425.5,145.6 Q421.75,130 425,113.4 Z"/></clipPath>
  <pattern id="fdots" width="6" height="6" patternUnits="userSpaceOnUse">
   <rect x="0" y="0" width="1" height="1" fill="#8c94e0"/>
   <rect x="3" y="3" width="1" height="1" fill="#c098b0"/>
  </pattern>
 </defs>
 <path d="M425,113.4 Q533,103 640.3,113.8 Q643,130 640.8,146.1 Q533,156.5 425.5,145.6 Q421.75,130 425,113.4 Z" fill="#a6aac8"/>
 <rect x="420" y="100" width="230" height="60" fill="url(#fdots)" clip-path="url(#fclip)" opacity="0.6"/>
 <path d="M425,113.4 Q533,103 640.3,113.8 Q643,130 640.8,146.1 Q533,156.5 425.5,145.6 Q421.75,130 425,113.4 Z" fill="none" stroke="#d4d8ec" stroke-width="1.2"/>
 <!-- move cursor -->
 <g>
  <path d="M435.4,112 V124.5 M429.5,118.3 H441.3" stroke="#fff" stroke-width="4"/>
  <path d="M435.4,108.1 L430.5,113 H440.3 Z M435.4,128.5 L430.5,123.6 H440.3 Z M425.2,118.3 L430.1,113.4 V123.2 Z M445.6,118.3 L440.7,113.4 V123.2 Z" fill="#000" stroke="#fff" stroke-width="1.3" stroke-linejoin="miter"/>
  <path d="M435.4,112.5 V124 M430,118.3 H440.8" stroke="#000" stroke-width="1.3"/>
 </g>
 <!-- check -->
 <defs><linearGradient id="chs" x1="0" y1="1" x2="1" y2="0"><stop offset="0" stop-color="#8890a8" stop-opacity="0.3"/><stop offset="1" stop-color="#404860"/></linearGradient></defs>
 <path d="M453.5,135.5 L468.3,127.6" stroke="url(#chs)" stroke-width="3.2" stroke-linecap="round"/>
 <path d="M446.6,129.3 L451.7,136.3" fill="none" stroke="#50d818" stroke-width="3.4" stroke-linecap="round"/>
 <path d="M451.3,136.3 L464.3,121.3" fill="none" stroke="#50d818" stroke-width="4.4" stroke-linecap="round"/>
 <!-- bar -->
 <rect x="481" y="119" width="3.2" height="26.6" fill="#000"/>
 <rect x="484.4" y="119.5" width="1.2" height="26" fill="#8890b8"/>
 <!-- dim arrow -->
 <g>
  <path d="M502.5,128 L507,122.5 H509 V126.5 L513,125.5 L516.5,123 L520,125.5 L524,126.5 V122.5 H526 L531.5,128 L526,133.5 H524 V129.5 H520 L516.5,132 L513,129.5 H509 V133.5 H507 Z" fill="#a8c4c0" stroke="#5048d0" stroke-width="1"/>
  <path d="M507,129.5 H527" stroke="#5048d0" stroke-width="1.5"/>
  <circle cx="516.7" cy="127.5" r="1.3" fill="#5048d0"/>
 </g>
 <!-- tape measure -->
 <g>
  <path d="M549.5,133.5 L557.5,138.5 L556,141.5 L548,136.5 Z" fill="#e86420"/>
  <path d="M556.3,138.3 L559.8,140 L558.5,142 L555.3,140.8 Z" fill="#404858"/>
  <path d="M543.5,119 C547,117.5 551,118 553,122 C554.5,126 554,131 550.5,134.5 C547.5,136 543.5,134 542,130 C540.5,125 541,121 543.5,119 Z" fill="#5c6676"/>
  <path d="M543,119.5 C546,118 550,118.5 552,121" fill="none" stroke="#8c94a4" stroke-width="1.3"/>
  <ellipse cx="544.3" cy="127.2" rx="2.6" ry="4.4" fill="#d4d8e4"/>
 </g>
 <!-- surface -->
 <g>
  <path d="M572,146 C580,142 587,136 591,129 C593,126 595,123 595.5,121 L597.5,124 C596,130 590,138 582,143 C578,145.5 575,146.5 572,146 Z" fill="#7c849c" opacity="0.85"/>
  <g stroke="#f01818" stroke-width="1.5" stroke-linecap="round">
   <path d="M578.7,125.9 L586.2,130.3 M583.6,123.3 L586.8,127.2 M587.8,122.8 L589.6,124.6 M575.8,130.6 L584,133 M575.5,134.5 L583,136 M575.5,138 L580.5,139 M574.8,141 L576.5,142"/>
  </g>
  <path d="M570.5,143.7 C572.5,138 573.5,133.5 574.3,131.4 C575.5,128 576.5,126 578,124.6 C580,122.7 584,121.6 588.3,121 C591,120.6 593.5,120 595.5,119" fill="none" stroke="#30e8f8" stroke-width="1.3"/>
  <path d="M570.8,144.8 C574,142.5 577,140.8 579.5,139 C583,136.5 585.5,134 587.1,131.4 C589,128.5 590.5,126 591.2,124.5 C592.5,122.5 593.8,121.5 594.9,120.8" fill="none" stroke="#fff" stroke-width="1.4"/>
 </g>
 <!-- frame with arrow -->
 <g>
  <path d="M610,130 L628,134 L622,139 Z" fill="none" stroke="#7880a0" stroke-width="1" opacity="0.8"/>
  <path d="M606,120.3 L621.5,124.4 L619.5,139.6 L606.4,133" fill="none" stroke="#182030" stroke-width="1.6"/>
  <path d="M616,138 L609,133.5" stroke="#f04010" stroke-width="1.5"/>
  <path d="M607.5,132.5 L611.5,132 L609.5,135.5 Z" fill="#f04010" stroke="#f04010" stroke-width="1"/>
 </g>
</svg>
</body></html>
